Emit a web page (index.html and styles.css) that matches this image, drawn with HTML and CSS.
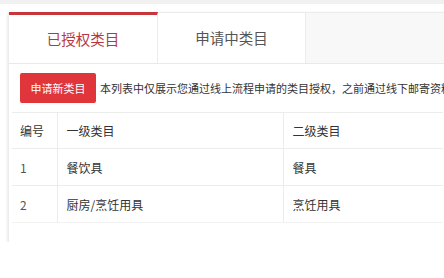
FILE: index.html
```html
<!DOCTYPE html>
<html lang="zh-CN">
<head>
<meta charset="utf-8">
<link rel="stylesheet" href="styles.css">
</head>
<body>
<div class="topstrip"></div>
<div class="card">
  <div class="tabs">
    <div class="tab active">已授权类目</div>
    <div class="tab">申请中类目</div>
    <div class="tab-rest"></div>
  </div>
  <div class="content">
    <div class="toolbar">
      <button class="btn">申请新类目</button>
      <span class="note">本列表中仅展示您通过线上流程申请的类目授权，之前通过线下邮寄资料申请的类目授权不在此处展示</span>
    </div>
    <table class="grid">
      <thead>
        <tr><th class="c1">编号</th><th class="c2">一级类目</th><th class="c3">二级类目</th></tr>
      </thead>
      <tbody>
        <tr><td class="c1 num">1</td><td class="c2">餐饮具</td><td class="c3">餐具</td></tr>
        <tr><td class="c1 num">2</td><td class="c2">厨房/烹饪用具</td><td class="c3">烹饪用具</td></tr>
      </tbody>
    </table>
  </div>
</div>
</body>
</html>
```
FILE: styles.css
```css
html, body {
  margin: 0;
  padding: 0;
  background: #ffffff;
  overflow: hidden;
  font-family: "Noto Sans CJK SC", "Noto Sans", sans-serif;
  color: #333;
}
.topstrip {
  height: 4px;
  background: #f1f1f1;
}
.card {
  margin: 8px 0 0 8px;
  width: 620px;
  height: 230px;
  border-left: 1px solid #ececec;
  box-shadow: 0 2px 3px rgba(0,0,0,0.08), -1px 0 2px rgba(0,0,0,0.04);
  background: #fff;
}
.tabs {
  display: flex;
  height: 52px;
  border-bottom: 1px solid #e9e9e9;
  box-sizing: border-box;
}
.tab {
  width: 148px;
  display: flex;
  align-items: center;
  justify-content: center;
  font-size: 14.5px;
  color: #555;
  border-top: 1px solid #ececec;
  border-right: 1px solid #ececec;
  box-sizing: border-box;
  padding-bottom: 2px;
}
.tab.active {
  width: 149px;
  border-top: 3px solid #c8363c;
  color: #b9363c;
}
.tab-rest {
  flex: 1;
  background: #f8f8f8;
  border-top: 1px solid #ececec;
}
.content {
  padding: 9px 0 0 3px;
}
.toolbar {
  display: flex;
  align-items: center;
  margin-left: 8px;
  white-space: nowrap;
}
.btn {
  font-family: inherit;
  background: #e0353b;
  color: #fff;
  border: none;
  border-radius: 2px;
  height: 30px;
  width: 76px;
  padding: 0;
  font-size: 11px;
}
.note {
  font-size: 11px;
  margin-left: 4px;
  color: #333;
}
.grid {
  margin-top: 9px;
  border-collapse: collapse;
  font-size: 12px;
}
.grid th, .grid td {
  text-align: left;
  font-weight: normal;
  padding: 0 8px;
  height: 36px;
  border-top: 1px solid #ececec;
  box-sizing: border-box;
}
.grid tbody td { height: 37px; }
.grid .c1 { width: 45px; }
.grid .c2 { width: 226px; border-left: 1px solid #ececec; padding-left: 9px; }
.grid .c3 { width: 160px; border-left: 1px solid #ececec; padding-left: 9px; }
.grid tbody tr:last-child td { border-bottom: 1px solid #f2f2f2; }
.num { color: #555; }
```
